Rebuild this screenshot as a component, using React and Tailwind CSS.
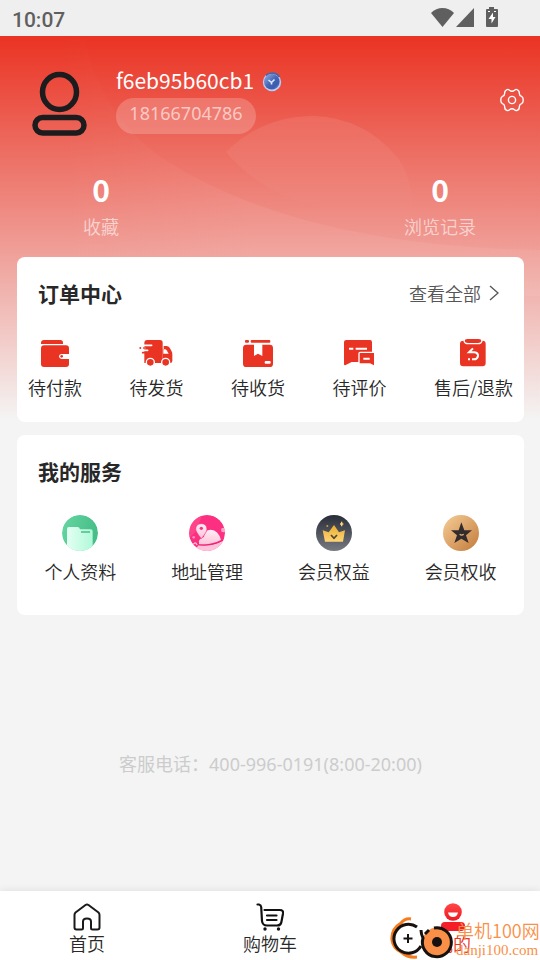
import React from "react";

const StatusBar = () => (
  <div className="flex h-9 items-center justify-between bg-[#efefef] pl-3 pr-10 text-[#5f5f5f]">
    <span className="pt-1 font-['Roboto',sans-serif] text-[21px] font-medium leading-8">10:07</span>
    <div className="flex items-center">
      <svg width="24" height="20" viewBox="0 1 24 20" fill="currentColor" aria-hidden="true">
        <path d="M11.500 20 0 6Q5 1 11.500 1T23 6Z" />
      </svg>
      <svg width="20" height="20" viewBox="0 1 20 20" fill="currentColor" aria-hidden="true">
        <path d="M19 1V20H1Z" />
      </svg>
      <svg className="ml-[9px]" width="16" height="22" viewBox="0 1 16 22" fill="currentColor" aria-hidden="true">
        <path d="M5 1H10V3H13Q14 3 14 4V20Q14 21 13 21H3Q2 21 2 20V4Q2 3 3 3H5Z" />
        <path d="M9 6.500V11H11.500L7.500 17.500V13H4.500ZM4 5H6V6H4ZM10 5H12V6H10Z" fill="#fff" />
      </svg>
    </div>
  </div>
);

const AvatarIcon = () => (
  <svg width="56" height="72" viewBox="0 -7 56 72" fill="none" stroke="#1c1c1e" strokeWidth="5.500" aria-hidden="true">
    <ellipse cx="27.500" cy="21" rx="17" ry="17.500" />
    <rect x="3" y="46.500" width="49" height="15.500" rx="7.700" />
  </svg>
);

const BadgeIcon = () => (
  <svg width="20" height="20" viewBox="0 0 20 20" aria-hidden="true">
    <defs>
      <linearGradient id="badge" x1="0" y1="0" x2="1" y2="1">
        <stop offset="0" stopColor="#9db3e6" />
        <stop offset="0.500" stopColor="#4365b4" />
        <stop offset="0.750" stopColor="#3a5cae" />
        <stop offset="1" stopColor="#7da0e6" />
      </linearGradient>
    </defs>
    <circle cx="10" cy="10" r="9.200" fill="#b9cdf4" />
    <path d="M4 3.500A9 9 0 0 1 17.500 5" fill="none" stroke="#4a66a8" strokeWidth="1.800" />
    <circle cx="9.800" cy="9.800" r="7.800" fill="url(#badge)" />
    <path d="M6.500 8 9.500 10.500 12.500 7.500M9.500 10.500V12.500" fill="none" stroke="#dfe8fb" strokeWidth="1.600" />
  </svg>
);

const GearIcon = () => (
  <svg width="24" height="24" viewBox="0 0 24 24" fill="none" stroke="#fff" strokeWidth="1.400" strokeLinejoin="round" aria-hidden="true">
    <path d="M9.500 2.200Q8 .8 6.500 1.800Q4.500 2.800 4.700 5Q4.800 7.500 2.500 8.300Q.7 9 .8 12Q.7 15 2.500 15.700Q4.800 16.500 4.700 19Q4.500 21.200 6.500 22.200Q8 23.200 9.500 21.800Q12 19.800 14.500 21.800Q16 23.200 17.500 22.200Q19.500 21.200 19.300 19Q19.200 16.500 21.500 15.700Q23.300 15 23.200 12Q23.300 9 21.500 8.300Q19.200 7.500 19.300 5Q19.500 2.800 17.500 1.800Q16 .8 14.500 2.200Q12 4.200 9.500 2.200Z" />
    <circle cx="12" cy="12" r="3.600" />
  </svg>
);

/* Iconos de pedidos */
const WalletIcon = () => (
  <svg width="28" height="28" viewBox="0 0 84 84" fill="#e93323" aria-hidden="true">
    <path d="M0 15V12Q0 3 9 3H58Q66 3 66 11V15Z" />
    <rect y="19" width="84" height="65" rx="9" />
    <path d="M84 45H61Q54 46 54 52T61 60H84Z" fill="#fff" />
    <circle cx="62" cy="52" r="4" />
  </svg>
);

const TruckIcon = () => (
  <svg width="34" height="28" viewBox="0 0 102 84" fill="#e93323" aria-hidden="true">
    <path d="M16 12Q16 3 25 3H63Q71 3 71 11V72H16Z" />
    <path d="M74 21H82Q89 21 92 26L97 35Q100 40 100 46V66Q100 72 94 72H71V30H74Z" />
    <path d="M73 31V44H89L83 34Q81 31 78 31Z" fill="#fff" />
    <path d="M14 19H38M14 34H26" stroke="#fff" strokeWidth="5" strokeLinecap="round" />
    <path d="M14 24H20V30H14Z" fill="#fff" />
    <path d="M14 27H36M11 41H24" stroke="#e93323" strokeWidth="5" strokeLinecap="round" />
    <circle cx="4" cy="27" r="3" />
    <circle cx="34" cy="70" r="12" stroke="#fff" strokeWidth="4" />
    <circle cx="80" cy="70" r="12" stroke="#fff" strokeWidth="4" />
  </svg>
);

const ParcelIcon = () => (
  <svg width="30" height="28" viewBox="0 0 90 84" fill="#e93323" aria-hidden="true">
    <rect x="6" y="3" width="12" height="8" rx="3" />
    <rect x="23" y="3" width="59" height="8" rx="3" />
    <rect y="17" width="90" height="67" rx="10" />
    <path d="M33 15H58V51L45 44L33 51Z" fill="#fff" />
    <rect x="65" y="66" width="18" height="8" rx="3" fill="#fff" />
  </svg>
);

const ReviewIcon = () => (
  <svg width="30" height="28" viewBox="0 0 90 84" fill="#e93323" aria-hidden="true">
    <path d="M0 9Q0 3 7 3H78Q84 3 84 10V38H48Q43 38 43 44V69H23L5 78Q0 80 0 74Z" />
    <path d="M47 42H90V79L78 73H47Z" />
    <path d="M15 29H28M35 29H69M58 59H77" stroke="#fff" strokeWidth="6" />
  </svg>
);

const RefundIcon = () => (
  <svg width="28" height="28" viewBox="0 5 84 84" fill="#e93323" aria-hidden="true">
    <path d="M13 10Q15 21 27 21H57Q69 21 71 10Q80 10 80 19V77Q80 87 70 87H13Q3 87 3 77V19Q3 10 13 10Z" />
    <path d="M17 11Q17 5 25 5H59Q67 5 67 11Q66 17 57 17H27Q18 17 17 11Z" />
    <path d="M42 33 30 45H46Q58 47 57 56Q55 66 45 66H39M33 66H27" fill="none" stroke="#fff" strokeWidth="6" />
  </svg>
);

/* Iconos de servicios */
const ProfileIcon = () => (
  <svg width="36" height="36" viewBox="0 0 108 108" aria-hidden="true">
    <defs>
      <linearGradient id="green" x1="0" y1="0" x2="1" y2="0.300">
        <stop offset="0" stopColor="#65d7a2" />
        <stop offset="1" stopColor="#47bd87" />
      </linearGradient>
      <linearGradient id="folder" x1="0" y1="0" x2="1" y2="0">
        <stop offset="0" stopColor="#e4fff3" />
        <stop offset="1" stopColor="#b0f9d9" />
      </linearGradient>
      <clipPath id="round">
        <circle cx="54" cy="54" r="54" />
      </clipPath>
    </defs>
    <g clipPath="url(#round)">
      <circle cx="54" cy="54" r="54" fill="url(#green)" />
      <path d="M15 42Q15 36 21 36H47Q52 36 54 43H86Q92 43 92 49V108H15Z" fill="url(#folder)" />
      <path d="M57 51H84" stroke="#47bd87" strokeWidth="5" />
    </g>
  </svg>
);

const AddressIcon = () => (
  <svg width="36" height="36" viewBox="0 0 108 108" aria-hidden="true">
    <defs>
      <linearGradient id="hill" x1="0" y1="0" x2="0" y2="1">
        <stop offset="0" stopColor="#fff0f6" />
        <stop offset="1" stopColor="#ffc2da" />
      </linearGradient>
    </defs>
    <g clipPath="url(#round)">
      <circle cx="54" cy="54" r="54" fill="#fd2f80" />
      <path d="M0 0H40L20 50L0 70Z" fill="#ff5c94" opacity="0.500" />
      <path d="M28 89Q70 96 103 76L108 108H20Z" fill="#ffc2da" />
      <path d="M28 88Q28 70 45 66Q45 44 65 44Q88 45 96 75Q65 91 28 88Z" fill="url(#hill)" />
      <path d="M28 80V90Q70 94 102 76" fill="none" stroke="#e9206d" strokeWidth="3" />
      <path d="M37 71Q20 51 20 42Q21 26 37 26T54 42Q54 51 37 71Z" fill="url(#hill)" stroke="#fd2f80" strokeWidth="2" />
      <circle cx="37" cy="40" r="5" fill="#fd2f80" />
      <circle cx="103" cy="45" r="7" fill="#ffa2c7" />
      <circle cx="14" cy="67" r="4" fill="#ff8dba" />
      <path d="M13 88Q20 78 24 90M17 99Q29 95 38 104" stroke="#ffc2da" strokeWidth="4" fill="none" />
    </g>
  </svg>
);

const CrownIcon = () => (
  <svg width="36" height="36" viewBox="0 0 108 108" aria-hidden="true">
    <defs>
      <linearGradient id="night" x1="0" y1="0" x2="0" y2="1">
        <stop offset="0" stopColor="#292d38" />
        <stop offset="1" stopColor="#777a81" />
      </linearGradient>
      <linearGradient id="gold" x1="0" y1="0" x2="0" y2="1">
        <stop offset="0" stopColor="#e9ad2f" />
        <stop offset="1" stopColor="#ffd477" />
      </linearGradient>
    </defs>
    <circle cx="54" cy="54" r="54" fill="url(#night)" />
    <path d="M20 46 38 52 54 30 69 52 87 46 81 80H27Z" fill="url(#gold)" />
    <path d="M45 60 54 70 63 60" fill="none" stroke="#54452c" strokeWidth="5" />
    <path d="M77 20V34M72 27H82" stroke="#ffd477" strokeWidth="4" />
    <circle cx="34" cy="33" r="3" fill="#c99b41" />
  </svg>
);

const StarIcon = () => (
  <svg width="36" height="36" viewBox="0 0 108 108" aria-hidden="true">
    <defs>
      <linearGradient id="bronze" x1="0" y1="0" x2="1" y2="1">
        <stop offset="0.100" stopColor="#f1c58e" />
        <stop offset="0.900" stopColor="#c88344" />
      </linearGradient>
    </defs>
    <circle cx="54" cy="54" r="54" fill="url(#bronze)" />
    <path d="M55 22 64 46H87L69 61L77 84L55 71L34 84L42 61L24 46H47Z" fill="#332c2c" />
    <path d="M50 58Q56 63 62 58" fill="none" stroke="#e5b57e" strokeWidth="4" />
  </svg>
);

/* Iconos de navegación */
const HomeIcon = () => (
  <svg width="28" height="28" viewBox="0 0 28 28" fill="none" stroke="#1a1a1a" strokeWidth="2" strokeLinejoin="round" aria-hidden="true">
    <path d="M12.500 2Q14 1 15.500 2L25.500 9.500Q26.500 10.500 26.500 12V24.500Q26.500 26.500 24.500 26.500H19.500Q18 26.500 18 25V18.500Q18 15.500 14 15.500T10 18.500V25Q10 26.500 8.500 26.500H3.500Q1.500 26.500 1.500 24.500V12Q1.500 10.500 2.500 9.500Z" />
  </svg>
);

const CartIcon = () => (
  <svg width="28" height="28" viewBox="0 0 28 28" fill="none" stroke="#111" strokeWidth="2.200" strokeLinecap="round" aria-hidden="true">
    <path d="M1.500 1.500H3Q5 2 5.200 4L6 18Q6.500 22.500 11 22.500H21Q25 22.500 25.500 18.500L27 10.500Q27.500 7 24 7H8.500M11 12.500H20.500M11 17H20.500" />
    <circle cx="9" cy="26" r="1.700" fill="#111" stroke="none" />
    <circle cx="22.500" cy="26" r="1.700" fill="#111" stroke="none" />
  </svg>
);

const UserIcon = () => (
  <svg width="28" height="28" viewBox="0 0 28 28" aria-hidden="true">
    <defs>
      <linearGradient id="user" x1="0" y1="0" x2="0" y2="1">
        <stop offset="0" stopColor="#ff4848" />
        <stop offset="1" stopColor="#ef1822" />
      </linearGradient>
    </defs>
    <circle cx="14" cy="9" r="8.800" fill="url(#user)" />
    <path d="M9 9.500H19Q18 14 14 14T9 9.500Z" fill="#fff" />
    <rect x="2" y="19" width="24" height="9" rx="4" fill="#f51f29" />
  </svg>
);

const orders = [
  { label: "待付款", icon: <WalletIcon /> },
  { label: "待发货", icon: <TruckIcon /> },
  { label: "待收货", icon: <ParcelIcon /> },
  { label: "待评价", icon: <ReviewIcon /> },
  { label: "售后/退款", icon: <RefundIcon /> },
];

const services = [
  { label: "个人资料", icon: <ProfileIcon /> },
  { label: "地址管理", icon: <AddressIcon /> },
  { label: "会员权益", icon: <CrownIcon /> },
  { label: "会员权收", icon: <StarIcon /> },
];

const tabs = [
  { label: "首页", icon: <HomeIcon />, color: "text-[#282828]" },
  { label: "购物车", icon: <CartIcon />, color: "text-[#282828]" },
  { label: "我的", icon: <UserIcon />, color: "text-[#e93323]" },
];

const Watermark = () => (
  <div className="pointer-events-none absolute bottom-0 right-0 flex items-end">
    <svg width="66" height="44" viewBox="0 0 66 44" fill="none" aria-hidden="true">
      <path d="M21 3Q15 2 11 7Q1 13 2 24Q3 32 11 36Q18 42 27 41" stroke="#f77b1c" strokeWidth="3" />
      <circle cx="18" cy="22.500" r="14" fill="#fff" />
      <path d="M27 11A14.500 14.500 0 1 0 31 30" stroke="#17120f" strokeWidth="3" />
      <path d="M18 18V27M13.500 22.500H22.500" stroke="#17120f" strokeWidth="2" />
      <circle cx="47" cy="26" r="14.500" fill="#fa9047" />
      <path d="M44 12A14.500 14.500 0 1 1 33 22Q31 18 31 14M35 18 39 14" stroke="#17120f" strokeWidth="3" />
      <circle cx="47" cy="26" r="5" fill="#17120f" />
    </svg>
    <div className="w-[84px] text-[#fa9047]">
      <p className="text-[18px] leading-5">单机100网</p>
      <p className="font-['Liberation_Serif',serif] text-[15px] leading-5">danji100.com</p>
    </div>
  </div>
);

const App = () => {
  return (
    <div className="flex min-h-screen flex-col bg-[#f4f4f4] font-['Noto_Sans_CJK_SC',sans-serif] text-[18px] font-[350] text-[#282828]">
      <StatusBar />

      <main className="relative flex-1 bg-[linear-gradient(180deg,#ea3323_0px,#f4f4f4_384px)] pl-[17px] pr-4">
        {/* Formas decorativas del fondo */}
        <svg className="absolute left-0 top-0 h-[260px] w-full" viewBox="0 0 540 260" preserveAspectRatio="none" aria-hidden="true">
          <defs>
            <linearGradient id="dome" x1="0" y1="0" x2="0" y2="1">
              <stop offset="0" stopColor="#fff" stopOpacity="0.090" />
              <stop offset="1" stopColor="#fff" stopOpacity="0" />
            </linearGradient>
            <linearGradient id="sweep" x1="0" y1="0" x2="1" y2="0">
              <stop offset="0" stopColor="#fff" stopOpacity="0" />
              <stop offset="0.400" stopColor="#fff" stopOpacity="0.060" />
              <stop offset="1" stopColor="#fff" stopOpacity="0.060" />
            </linearGradient>
          </defs>
          <path d="M84 0Q100 80 165 124Q300 210 540 214V260H60V0Z" fill="url(#sweep)" />
          <path d="M226 116Q262 80 314 80Q364 82 396 120Q412 138 412 175Q290 190 226 116Z" fill="url(#dome)" />
        </svg>

        <header className="relative flex items-center pl-[15px] pt-7">
          <AvatarIcon />
          <div className="ml-7 flex-1">
            <div className="flex h-8 items-start gap-2 text-[21px] text-white">
              <h1 className="font-normal leading-7">f6eb95b60cb1</h1>
              <span className="pt-1.5">
                <BadgeIcon />
              </span>
            </div>
            <p className="h-9 w-[140px] rounded-full bg-white/20 text-center font-['Noto_Sans',sans-serif] font-normal leading-[30px] text-white/60">
              18166704786
            </p>
          </div>
          <button type="button" aria-label="设置">
            <GearIcon />
          </button>
        </header>

        <div className="relative flex justify-between px-12 pt-7 text-center">
          <a href="#favorites" className="w-[72px]">
            <p className="text-[30px] font-bold leading-[50px] text-white">0</p>
            <p className="leading-6 text-white/60">收藏</p>
          </a>
          <a href="#history" className="w-[72px]">
            <p className="text-[30px] font-bold leading-[50px] text-white">0</p>
            <p className="leading-6 text-white/60">浏览记录</p>
          </a>
        </div>

        {/* Centro de pedidos */}
        <section className="relative mt-[19px] h-[165px] rounded-lg bg-white">
          <div className="flex items-center justify-between pl-[21px] pr-[25px] pt-5">
            <h2 className="text-[21px] font-bold leading-8">订单中心</h2>
            <a href="#orders" className="flex items-center gap-2 leading-8 text-[#555]">
              查看全部
              <svg width="10" height="16" viewBox="0 0 10 16" fill="none" stroke="currentColor" strokeWidth="1.300" aria-hidden="true">
                <path d="M1 1 9 8 1 15" />
              </svg>
            </a>
          </div>
          <div className="flex justify-between px-[11px] pt-[30px]">
            {orders.map((item) => (
              <a key={item.label} href="#orders" className="flex flex-col items-center gap-2">
                {item.icon}
                <span className="leading-6">{item.label}</span>
              </a>
            ))}
          </div>
        </section>

        {/* Mis servicios */}
        <section className="relative mt-[13px] rounded-lg bg-white pb-8">
          <h2 className="pl-[21px] pt-5 text-[21px] font-bold leading-8">我的服务</h2>
          <div className="grid grid-cols-4 pt-7">
            {services.map((item) => (
              <a key={item.label} href="#services" className="flex flex-col items-center gap-2">
                {item.icon}
                <span className="leading-6">{item.label}</span>
              </a>
            ))}
          </div>
        </section>

        <p className="pb-6 pt-[135px] text-center font-['Noto_Sans','Noto_Sans_CJK_SC',sans-serif] font-normal leading-7 text-[#ccc]">
          客服电话：400-996-0191(8:00-20:00)
        </p>
      </main>

      <nav className="relative flex justify-around bg-white pb-[5px] pt-3 shadow-[0_0_8px_rgba(0,0,0,0.1)]">
        {tabs.map((tab) => (
          <a key={tab.label} href="#tab" className={`flex flex-col items-center ${tab.color}`}>
            {tab.icon}
            <span className="leading-6">{tab.label}</span>
          </a>
        ))}
        <Watermark />
      </nav>
    </div>
  );
};

export default App;
